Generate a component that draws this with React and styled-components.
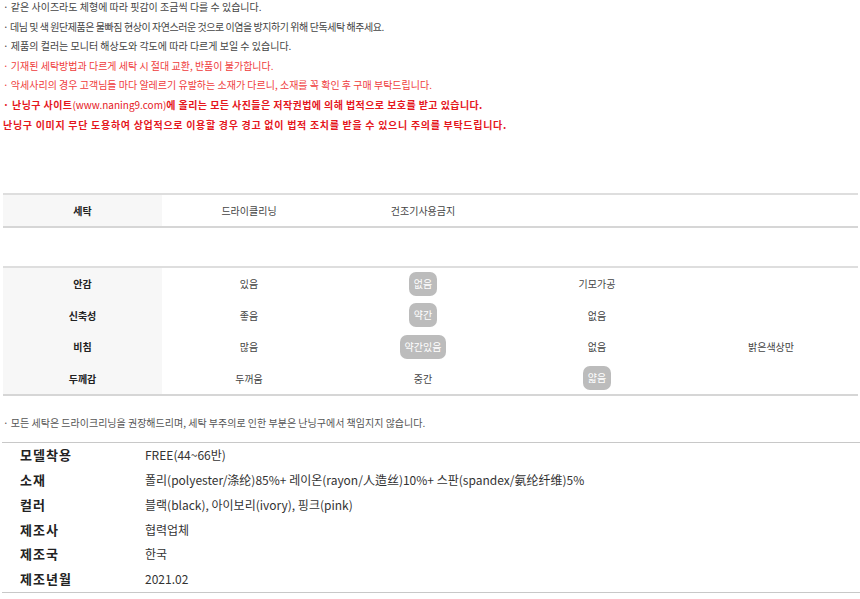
import React from "react";
import styled, { createGlobalStyle } from "styled-components";

const GlobalStyle = createGlobalStyle`
  html, body {
    margin: 0;
    padding: 0;
    background: #fff;
  }
  body {
    font-family: "Noto Sans CJK KR", "Noto Sans", sans-serif;
    color: #333;
  }
`;

const Page = styled.div`
  width: 860px;
  height: 599px;
  overflow: hidden;
  padding: 0 2px 0 3px;
  box-sizing: border-box;
`;

const Notes = styled.ul`
  list-style: none;
  margin: -3px 0 0;
  padding: 0;
`;

const Note = styled.li`
  height: 19.6px;
  line-height: 19.6px;
  font-size: 10px;
  white-space: nowrap;
  color: ${(props) =>
    props.$tone === "alert" ? "#e5161c" : props.$tone === "red" ? "#ef3c3c" : "#444"};
  font-weight: ${(props) => (props.$tone === "alert" ? 700 : 400)};
  letter-spacing: ${(props) => props.$spacing ?? 0}px;
`;

const Url = styled.span`
  font-weight: 400;
  letter-spacing: 0;
`;

const SpecTable = styled.div`
  display: grid;
  grid-template-columns: 159px repeat(4, 174px);
  margin-top: ${(props) => props.$gap}px;
  border-top: 2px solid #dedede;
  border-bottom: 2px solid #d6d6d6;
`;

const HeadCell = styled.div`
  height: ${(props) => props.$h}px;
  display: flex;
  align-items: center;
  justify-content: center;
  background: #f7f7f7;
  font-size: 10px;
  font-weight: 700;
  color: #222;
`;

const Cell = styled.div`
  height: ${(props) => props.$h}px;
  display: flex;
  align-items: center;
  justify-content: center;
  font-size: 10px;
  color: #444;
`;

const Pill = styled.span`
  display: inline-block;
  height: 24px;
  line-height: 24px;
  padding: 0 5px;
  border-radius: 7px;
  background: #bcbcbc;
  color: #fff;
`;

const CareNote = styled.p`
  margin: 17px 0 0;
  height: 20px;
  line-height: 20px;
  font-size: 10px;
  color: #555;
  white-space: nowrap;
`;

const InfoTable = styled.div`
  display: grid;
  grid-template-columns: 143px 1fr;
  margin: 9px -2px 0 -1px;
  border-top: 1px solid #c8c8c8;
  border-bottom: 1px solid #c8c8c8;
`;

const InfoLabel = styled.div`
  height: 24.8px;
  line-height: 24.8px;
  padding-left: 18px;
  font-size: 13px;
  font-weight: 700;
  letter-spacing: 1px;
  color: #222;
`;

const InfoValue = styled.div`
  height: 24.8px;
  line-height: 24.8px;
  font-size: 12px;
  color: #333;
  white-space: nowrap;
`;

const notes = [
  { text: "· 같은 사이즈라도 체형에 따라 핏감이 조금씩 다를 수 있습니다." },
  {
    text: "· 데님 및 색 원단제품은 물빠짐 현상이 자연스러운 것으로 이염을 방지하기 위해 단독세탁 해주세요.",
    spacing: -0.45,
  },
  { text: "· 제품의 컬러는 모니터 해상도와 각도에 따라 다르게 보일 수 있습니다." },
  { text: "· 기재된 세탁방법과 다르게 세탁 시 절대 교환, 반품이 불가합니다.", tone: "red" },
  {
    text: "· 악세사리의 경우 고객님들 마다 알레르기 유발하는 소재가 다르니, 소재를 꼭 확인 후 구매 부탁드립니다.",
    tone: "red",
  },
  {
    text: (
      <>
        · 난닝구 사이트<Url>(www.naning9.com)</Url>에 올리는 모든 사진들은 저작권법에 의해 법적으로 보호를 받고 있습니다.
      </>
    ),
    tone: "alert",
    spacing: 0.42,
  },
  {
    text: "난닝구 이미지 무단 도용하여 상업적으로 이용할 경우 경고 없이 법적 조치를 받을 수 있으니 주의를 부탁드립니다.",
    tone: "alert",
    spacing: 0.7,
  },
];

// selected is the index of the highlighted option
const fabric = [
  { label: "안감", options: ["있음", "없음", "기모가공", ""], selected: 1 },
  { label: "신축성", options: ["좋음", "약간", "없음", ""], selected: 1 },
  { label: "비침", options: ["많음", "약간있음", "없음", "밝은색상만"], selected: 1 },
  { label: "두께감", options: ["두꺼움", "중간", "얇음", ""], selected: 2 },
];

const info = [
  ["모델착용", "FREE(44~66반)"],
  ["소재", "폴리(polyester/涤纶)85%+ 레이온(rayon/人造丝)10%+ 스판(spandex/氨纶纤维)5%"],
  ["컬러", "블랙(black), 아이보리(ivory), 핑크(pink)"],
  ["제조사", "협력업체"],
  ["제조국", "한국"],
  ["제조년월", "2021.02"],
];

export default function App() {
  return (
    <>
      <GlobalStyle />
      <Page>
        <Notes>
          {notes.map((n, i) => (
            <Note key={i} $tone={n.tone} $spacing={n.spacing}>
              {n.text}
            </Note>
          ))}
        </Notes>

        <SpecTable $gap={59}>
          <HeadCell $h={31}>세탁</HeadCell>
          <Cell $h={31}>드라이클리닝</Cell>
          <Cell $h={31}>건조기사용금지</Cell>
          <Cell $h={31} />
          <Cell $h={31} />
        </SpecTable>

        <SpecTable $gap={38}>
          {fabric.map((row) => (
            <React.Fragment key={row.label}>
              <HeadCell $h={31.5}>{row.label}</HeadCell>
              {row.options.map((opt, i) => (
                <Cell $h={31.5} key={i}>
                  {i === row.selected ? <Pill>{opt}</Pill> : opt}
                </Cell>
              ))}
            </React.Fragment>
          ))}
        </SpecTable>

        <CareNote>
          · 모든 세탁은 드라이크리닝을 권장해드리며, 세탁 부주의로 인한 부분은 난닝구에서 책임지지 않습니다.
        </CareNote>

        <InfoTable>
          {info.map(([label, value]) => (
            <React.Fragment key={label}>
              <InfoLabel>{label}</InfoLabel>
              <InfoValue>{value}</InfoValue>
            </React.Fragment>
          ))}
        </InfoTable>
      </Page>
    </>
  );
}
